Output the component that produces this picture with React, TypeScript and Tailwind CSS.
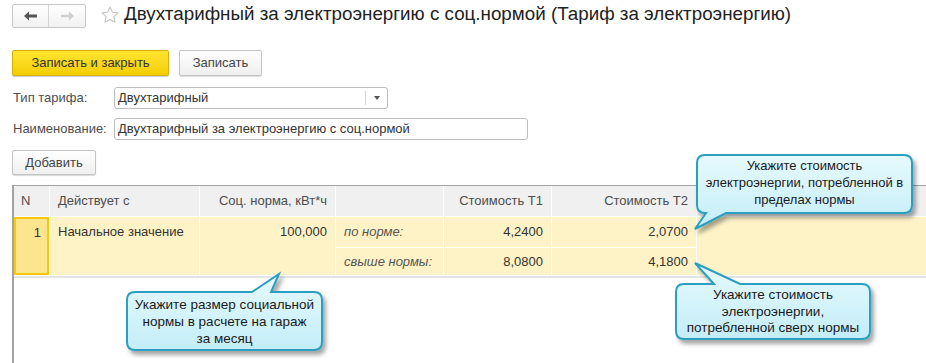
import React from "react";

type Callout = {
  x0: number;
  y0: number;
  x1: number;
  y1: number;
  side: "top" | "bottom";
  tb1: number;
  tb2: number;
  tipX: number;
  tipY: number;
};

const callouts: Callout[] = [
  { x0: 697, y0: 155, x1: 912, y1: 213, side: "bottom", tb1: 706, tb2: 726, tipX: 695, tipY: 229 },
  { x0: 127, y0: 292, x1: 322, y1: 350, side: "top", tb1: 252, tb2: 271, tipX: 279, tipY: 274 },
  { x0: 676, y0: 284, x1: 870, y1: 339, side: "top", tb1: 714, tb2: 740, tipX: 695, tipY: 263 },
];

function calloutPath(c: Callout): string {
  const r = 8;
  const { x0, y0, x1, y1, tb1, tb2, tipX, tipY } = c;
  if (c.side === "top") {
    return `M ${x0 + r} ${y0} H ${tb1} L ${tipX} ${tipY} L ${tb2} ${y0} H ${x1 - r} Q ${x1} ${y0} ${x1} ${y0 + r} V ${y1 - r} Q ${x1} ${y1} ${x1 - r} ${y1} H ${x0 + r} Q ${x0} ${y1} ${x0} ${y1 - r} V ${y0 + r} Q ${x0} ${y0} ${x0 + r} ${y0} Z`;
  }
  return `M ${x0 + r} ${y0} H ${x1 - r} Q ${x1} ${y0} ${x1} ${y0 + r} V ${y1 - r} Q ${x1} ${y1} ${x1 - r} ${y1} H ${tb2} L ${tipX} ${tipY} L ${tb1} ${y1} H ${x0 + r} Q ${x0} ${y1} ${x0} ${y1 - r} V ${y0 + r} Q ${x0} ${y0} ${x0 + r} ${y0} Z`;
}

function Callouts() {
  return (
    <svg className="pointer-events-none absolute left-0 top-0" width={926} height={363} viewBox="0 0 926 363">
      <defs>
        <linearGradient id="cfill" x1="0" y1="0" x2="0" y2="1">
          <stop offset="0" stopColor="#e6fafd" />
          <stop offset="1" stopColor="#c4edf8" />
        </linearGradient>
        <filter id="cshadow" x="-10%" y="-10%" width="130%" height="140%">
          <feDropShadow dx="3" dy="4" stdDeviation="2" floodColor="#000" floodOpacity="0.35" />
        </filter>
      </defs>
      {callouts.map((c, i) => (
        <path key={i} d={calloutPath(c)} fill="url(#cfill)" stroke="#2a9fc0" strokeWidth={2} filter="url(#cshadow)" />
      ))}
    </svg>
  );
}

function Star() {
  return (
    <svg width="20" height="20" viewBox="0 0 24 24" fill="none" stroke="#c4c4c4" strokeWidth="1.3" strokeLinejoin="round">
      <path d="M12 2.5l2.9 6.2 6.7.7-5 4.6 1.4 6.6L12 17.3l-6 3.3 1.4-6.6-5-4.6 6.7-.7z" />
    </svg>
  );
}

export default function App() {
  return (
    <div
      className="relative w-[926px] h-[363px] overflow-hidden bg-white text-[13px] text-[#333]"
      style={{ fontFamily: '"Liberation Sans", Arial, sans-serif' }}
    >
      <div className="pl-3">
        {/* title bar */}
        <div className="flex items-center h-[24px] mt-[4px]">
          <div className="flex h-[24px] border border-[#c8c8c8] rounded-[2px] bg-gradient-to-b from-white to-[#f1f1f1]">
            <div className="w-[36px] flex items-center justify-center border-r border-[#d4d4d4]">
              <svg width="14" height="10" viewBox="0 0 14 10">
                <path d="M0 5 L5 0.5 V3.5 H13 V6.5 H5 V9.5 Z" fill="#555" />
              </svg>
            </div>
            <div className="w-[36px] flex items-center justify-center">
              <svg width="14" height="10" viewBox="0 0 14 10">
                <path d="M14 5 L9 0.5 V3.8 H1 V6.2 H9 V9.5 Z" fill="#cfcfcf" />
              </svg>
            </div>
          </div>
          <div className="ml-[14px] mt-[-2px]">
            <Star />
          </div>
          <div className="ml-[4px] text-[18.8px] text-[#222] leading-none mt-[-3px]">
            Двухтарифный за электроэнергию с соц.нормой (Тариф за электроэнергию)
          </div>
        </div>

        {/* command bar */}
        <div className="flex gap-[10px] mt-[22px]">
          <button className="h-[26px] w-[157px] rounded-[2px] border border-[#d4b100] bg-gradient-to-b from-[#ffe52e] to-[#f3cd00] text-[13px] text-[#333] shadow-[0_1px_1px_rgba(0,0,0,0.2)]">
            Записать и закрыть
          </button>
          <button className="h-[26px] w-[83px] rounded-[2px] border border-[#c4c4c4] bg-gradient-to-b from-white to-[#efefef] text-[13px] text-[#444] shadow-[0_1px_1px_rgba(0,0,0,0.15)]">
            Записать
          </button>
        </div>

        {/* form */}
        <div className="flex items-center mt-[11px] h-[22px]">
          <div className="w-[102px] text-[#4d4d4d] pl-px">Тип тарифа:</div>
          <div className="flex h-[22px] w-[274px] rounded-[3px] border border-[#bdbdbd] bg-white">
            <div className="flex-1 px-[3px] leading-[20px] text-[#333]">Двухтарифный</div>
            <div className="w-[22px] my-[3px] border-l border-[#d6d6d6] flex items-center justify-center">
              <svg width="6" height="4" viewBox="0 0 6 4">
                <path d="M0 0 H6 L3 4 Z" fill="#555" />
              </svg>
            </div>
          </div>
        </div>
        <div className="flex items-center mt-[9px] h-[22px]">
          <div className="w-[102px] text-[#4d4d4d] pl-px">Наименование:</div>
          <div className="h-[22px] w-[414px] rounded-[3px] border border-[#bdbdbd] bg-white px-[3px] leading-[20px] text-[#333]">
            Двухтарифный за электроэнергию с соц.нормой
          </div>
        </div>
        <button className="mt-[10px] h-[25px] w-[84px] rounded-[2px] border border-[#c4c4c4] bg-gradient-to-b from-white to-[#efefef] text-[13px] text-[#444] shadow-[0_1px_1px_rgba(0,0,0,0.15)]">
          Добавить
        </button>

        {/* table */}
        <div className="mt-[10px] border-t border-l-2 border-[#a3a3a3] h-[200px]">
          <div className="grid grid-cols-[35px_149px_135px_107px_107px_144px_1fr] grid-rows-[30px_30px_27px] gap-px bg-white">
            <div className="bg-[#f0f0f0] text-[#4d4d4d] pl-[7px] leading-[30px]">N</div>
            <div className="bg-[#f0f0f0] text-[#4d4d4d] pl-[8px] leading-[30px]">Действует с</div>
            <div className="bg-[#f0f0f0] text-[#4d4d4d] pr-[8px] text-right leading-[30px]">Соц. норма, кВт*ч</div>
            <div className="bg-[#f0f0f0]" />
            <div className="bg-[#f0f0f0] text-[#4d4d4d] pr-[8px] text-right leading-[30px]">Стоимость Т1</div>
            <div className="bg-[#f0f0f0] text-[#4d4d4d] pr-[8px] text-right leading-[30px]">Стоимость Т2</div>
            <div className="bg-[#f0f0f0]" />

            <div className="row-span-2 bg-[#fde58f] border-2 border-[#f9c70c] text-right pr-[6px] leading-[27px] text-[#333]">1</div>
            <div className="row-span-2 bg-[#fef3c6] pl-[8px] leading-[30px] text-[#333]">Начальное значение</div>
            <div className="row-span-2 bg-[#fef3c6] pr-[8px] text-right leading-[30px] text-[#333]">100,000</div>
            <div className="bg-[#fef3c6] pl-[8px] leading-[30px] italic text-[#555]">по норме:</div>
            <div className="bg-[#fef3c6] pr-[8px] text-right leading-[30px] text-[#333]">4,2400</div>
            <div className="bg-[#fef3c6] pr-[8px] text-right leading-[30px] text-[#333]">2,0700</div>
            <div className="row-span-2 bg-[#fef3c6]" />

            <div className="bg-[#fef3c6] pl-[8px] leading-[27px] italic text-[#555]">свыше нормы:</div>
            <div className="bg-[#fef3c6] pr-[8px] text-right leading-[27px] text-[#333]">8,0800</div>
            <div className="bg-[#fef3c6] pr-[8px] text-right leading-[27px] text-[#333]">4,1800</div>
          </div>
          <div className="h-[2px] bg-[#e4e4e4] mt-px" />
        </div>
      </div>

      <Callouts />

      <div className="absolute left-[697px] top-[157px] w-[215px] text-center text-[13px] leading-[17px] text-[#1a1a1a]">
        Укажите стоимость
        <br />
        электроэнергии, потребленной в
        <br />
        пределах нормы
      </div>
      <div className="absolute left-[127px] top-[296px] w-[195px] text-center text-[13.5px] leading-[17px] text-[#1a1a1a]">
        Укажите размер социальной
        <br />
        нормы в расчете на гараж
        <br />
        за месяц
      </div>
      <div className="absolute left-[676px] top-[287px] w-[194px] text-center text-[13.5px] leading-[16.5px] text-[#1a1a1a]">
        Укажите стоимость
        <br />
        электроэнергии,
        <br />
        потребленной сверх нормы
      </div>
    </div>
  );
}
